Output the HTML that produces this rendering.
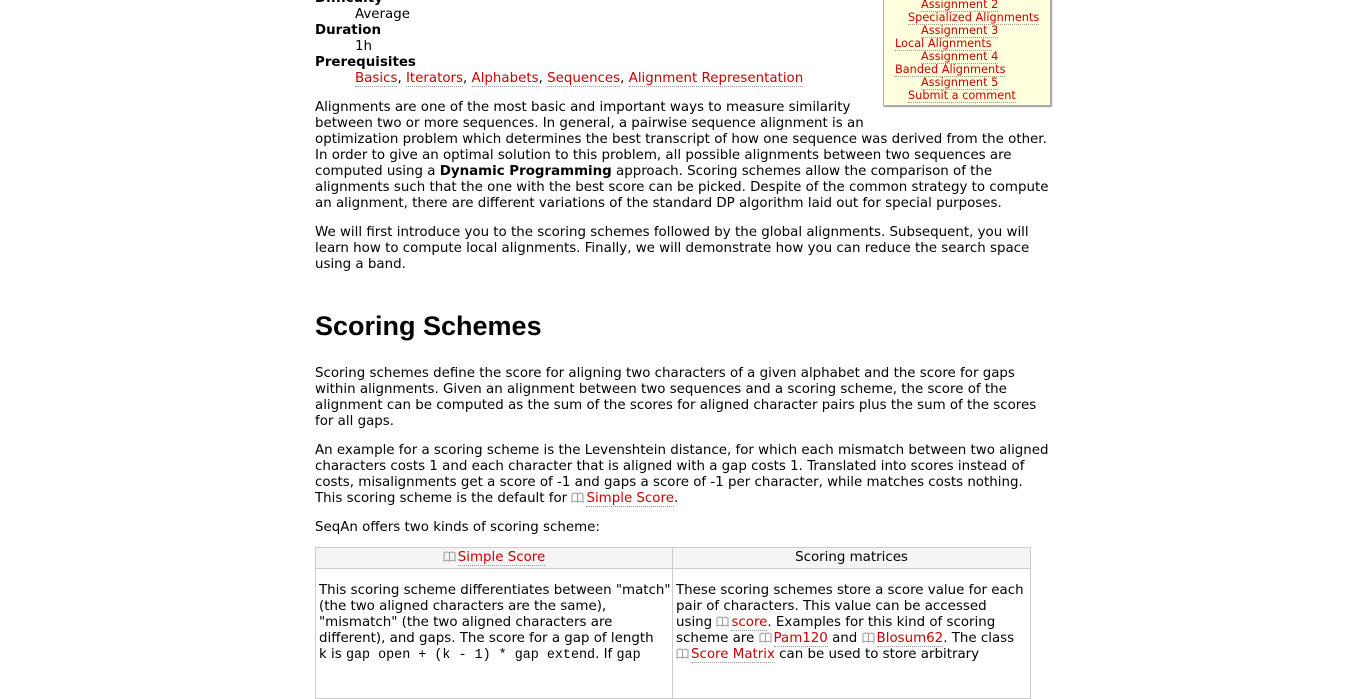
<!DOCTYPE html>
<html><head><meta charset="utf-8"><style>
body{margin:0;width:1349px;height:667px;overflow:hidden;background:#fff;font-family:"DejaVu Sans",Verdana,sans-serif;font-size:13.4px;color:#000;position:relative}
.l{position:absolute;white-space:nowrap;line-height:16px;height:16px}
a{color:#c00;text-decoration:none;border-bottom:1px dotted #999}
b{font-weight:bold}
.side{position:absolute;left:883px;top:-8px;width:166px;height:113px;background:#ffffdd;border:1px solid #aaa;border-top:none;box-shadow:1px 1px 1px #999}
.side .l{font-size:11.3px;line-height:13px;height:13px}
h2{position:absolute;left:315px;top:309px;margin:0;font-family:"Liberation Sans",Arial,sans-serif;font-size:27px;font-weight:bold;line-height:34px}
.bk{display:inline-block;width:13px;height:11px;vertical-align:-1px;margin-right:2px}
code{font-family:"Liberation Mono",monospace;font-size:13.4px}
table{position:absolute;left:315px;top:547px;border-collapse:collapse;width:715px;font-size:13.4px;table-layout:fixed}
td{border:1px solid #ccc;vertical-align:top;padding:0 3px;white-space:nowrap;overflow:hidden}
</style></head><body>
<svg width="0" height="0" style="position:absolute"><defs><symbol id="bk" viewBox="0 0 13 11"><path d="M1 2 Q4 0 6.5 2 Q9 0 12 2 V10 Q9 8.5 6.5 10 Q4 8.5 1 10 Z M6.5 2 V10" fill="none" stroke="#999" stroke-width="1"/></symbol></defs></svg>

<div class="l" style="left:315px;top:-9px"><b>Difficulty</b></div>
<div class="l" style="left:355px;top:7px">Average</div>
<div class="l" style="left:315px;top:23px"><b>Duration</b></div>
<div class="l" style="left:355px;top:39px">1h</div>
<div class="l" style="left:315px;top:55px"><b>Prerequisites</b></div>
<div class="l" style="left:355px;top:71px"><a>Basics</a>, <a>Iterators</a>, <a>Alphabets</a>, <a>Sequences</a>, <a>Alignment Representation</a></div>

<div class="side">
<div class="l" style="left:37px;top:6px"><a>Assignment 2</a></div>
<div class="l" style="left:24px;top:19px"><a>Specialized Alignments</a></div>
<div class="l" style="left:37px;top:32px"><a>Assignment 3</a></div>
<div class="l" style="left:11px;top:45px"><a>Local Alignments</a></div>
<div class="l" style="left:37px;top:58px"><a>Assignment 4</a></div>
<div class="l" style="left:11px;top:71px"><a>Banded Alignments</a></div>
<div class="l" style="left:37px;top:84px"><a>Assignment 5</a></div>
<div class="l" style="left:24px;top:97px"><a>Submit a comment</a></div>
</div>

<div class="l" style="left:315px;top:100px">Alignments are one of the most basic and important ways to measure similarity</div>
<div class="l" style="left:315px;top:116px">between two or more sequences. In general, a pairwise sequence alignment is an</div>
<div class="l" style="left:315px;top:132px">optimization problem which determines the best transcript of how one sequence was derived from the other.</div>
<div class="l" style="left:315px;top:148px">In order to give an optimal solution to this problem, all possible alignments between two sequences are</div>
<div class="l" style="left:315px;top:164px">computed using a <b>Dynamic Programming</b> approach. Scoring schemes allow the comparison of the</div>
<div class="l" style="left:315px;top:180px">alignments such that the one with the best score can be picked. Despite of the common strategy to compute</div>
<div class="l" style="left:315px;top:196px">an alignment, there are different variations of the standard DP algorithm laid out for special purposes.</div>

<div class="l" style="left:315px;top:225px">We will first introduce you to the scoring schemes followed by the global alignments. Subsequent, you will</div>
<div class="l" style="left:315px;top:241px">learn how to compute local alignments. Finally, we will demonstrate how you can reduce the search space</div>
<div class="l" style="left:315px;top:257px">using a band.</div>

<h2>Scoring Schemes</h2>

<div class="l" style="left:315px;top:366px">Scoring schemes define the score for aligning two characters of a given alphabet and the score for gaps</div>
<div class="l" style="left:315px;top:382px">within alignments. Given an alignment between two sequences and a scoring scheme, the score of the</div>
<div class="l" style="left:315px;top:398px">alignment can be computed as the sum of the scores for aligned character pairs plus the sum of the scores</div>
<div class="l" style="left:315px;top:414px">for all gaps.</div>

<div class="l" style="left:315px;top:443px">An example for a scoring scheme is the Levenshtein distance, for which each mismatch between two aligned</div>
<div class="l" style="left:315px;top:459px">characters costs 1 and each character that is aligned with a gap costs 1. Translated into scores instead of</div>
<div class="l" style="left:315px;top:475px">costs, misalignments get a score of -1 and gaps a score of -1 per character, while matches costs nothing.</div>
<div class="l" style="left:315px;top:491px">This scoring scheme is the default for <svg class="bk"><use href="#bk"/></svg><a>Simple Score</a>.</div>

<div class="l" style="left:315px;top:520px">SeqAn offers two kinds of scoring scheme:</div>

<table>
<colgroup><col style="width:357px"><col style="width:358px"></colgroup>
<tr style="height:20px;background:#f5f5f5"><td style="text-align:center;line-height:20px"><svg class="bk"><use href="#bk"/></svg><a>Simple Score</a></td><td style="text-align:center;line-height:20px">Scoring matrices</td></tr>
<tr style="height:130px"><td style="line-height:16px;padding-top:14px">This scoring scheme differentiates between "match"<br>(the two aligned characters are the same),<br>"mismatch" (the two aligned characters are<br>different), and gaps. The score for a gap of length<br>k is <code>gap open + (k - 1) * gap extend</code>. If <code>gap</code></td>
<td style="line-height:16px;padding-top:14px">These scoring schemes store a score value for each<br>pair of characters. This value can be accessed<br>using <svg class="bk"><use href="#bk"/></svg><a>score</a>. Examples for this kind of scoring<br>scheme are <svg class="bk"><use href="#bk"/></svg><a>Pam120</a> and <svg class="bk"><use href="#bk"/></svg><a>Blosum62</a>. The class<br><svg class="bk"><use href="#bk"/></svg><a>Score Matrix</a> can be used to store arbitrary</td></tr>
</table>
</body></html>
